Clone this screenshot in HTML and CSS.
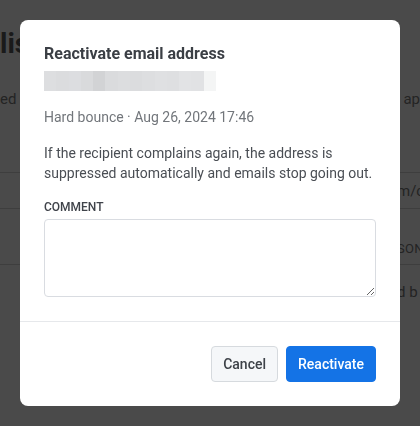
FILE: index.html
```html
<!DOCTYPE html>
<html lang="en">
<head>
<meta charset="utf-8">
<title>Reactivate email address</title>
<link rel="stylesheet" href="styles.css">
</head>
<body>
<main class="page">
  <h1 class="page-title">list</h1>
  <div class="page-sub"><span>ed recipients</span><span>n ap</span></div>
  <div class="table">
    <div class="row row-head"><span class="cell-right">m/c</span></div>
    <div class="row row-tall"><span class="cell-right caps">SON</span></div>
    <div class="row row-last"><span class="cell-right">d b</span></div>
  </div>
</main>

<div class="overlay">
  <div class="modal" role="dialog" aria-labelledby="modal-title">
    <div class="modal-body">
      <h2 class="modal-title" id="modal-title">Reactivate email address</h2>
      <div class="email-blur" aria-label="hidden email address">
        <span class="b1"></span><span class="b2"></span><span class="b3"></span><span class="b4"></span><span class="b5"></span><span class="b6"></span><span class="b7"></span><span class="b8"></span><span class="b9"></span><span class="b10"></span><span class="b11"></span><span class="b12"></span><span class="b13"></span><span class="b14"></span>
      </div>
      <p class="meta">Hard bounce · Aug 26, 2024 17:46</p>
      <p class="desc">If the recipient complains again, the address is suppressed automatically and emails stop going out.</p>
      <label class="field-label" for="comment">COMMENT</label>
      <textarea class="field-input" id="comment"></textarea>
    </div>
    <div class="modal-footer">
      <button class="btn btn-secondary" type="button">Cancel</button>
      <button class="btn btn-primary" type="button">Reactivate</button>
    </div>
  </div>
</div>
</body>
</html>
```

FILE: styles.css
```css
* { box-sizing: border-box; }

html, body {
  margin: 0;
  padding: 0;
  width: 420px;
  height: 426px;
  overflow: hidden;
  background: #ffffff;
  font-family: Roboto, "Liberation Sans", Arial, sans-serif;
}

/* background page (under overlay) */
.page {
  padding: 0;
  color: #7c7c7c;
}

.page-title {
  margin: 0;
  padding-top: 30px;
  font-size: 28px;
  line-height: 28px;
  font-weight: 700;
  color: #5a5a5a;
}

.page-sub {
  margin-top: 31px;
  display: flex;
  justify-content: space-between;
  font-size: 15px;
  line-height: 20px;
  color: #7c7c7c;
  white-space: nowrap;
}

.table {
  margin-top: 63px;
  border-top: 1px solid #d6d6d6;
}

.row {
  height: 56px;
  display: grid;
  grid-template-columns: 397px 23px;
  align-items: center;
  border-bottom: 1px solid #d6d6d6;
  font-size: 15px;
  color: #7a7a7a;
  white-space: nowrap;
}

.row-head {
  height: 36px;
}

.row-tall {
  align-items: end;
  padding-bottom: 8px;
}

.row-last {
  align-items: start;
  padding-top: 18px;
  border-bottom: 0;
}

.cell-right {
  grid-column: 2;
  overflow: hidden;
}

.caps {
  font-size: 13px;
  letter-spacing: 0.3px;
}

/* overlay + modal */
.overlay {
  position: fixed;
  inset: 0;
  background: rgba(0, 0, 0, 0.71);
  display: flex;
  align-items: flex-start;
  justify-content: center;
  padding-top: 20px;
}

.modal {
  width: 380px;
  background: #ffffff;
  border-radius: 8px;
  overflow: hidden;
}

.modal-body {
  padding: 24px 24px 24px;
  border-bottom: 1px solid #e6e8eb;
}

.modal-title {
  margin: 0;
  font-size: 16px;
  line-height: 20px;
  font-weight: 700;
  color: #3b3f45;
}

.email-blur {
  margin-top: 7px;
  width: 172px;
  height: 20px;
  display: flex;
}

.email-blur span { flex: 1; }
.b1 { background: #dddee0; }
.b2 { background: #dbdcde; }
.b3 { background: #dcdde0; }
.b4 { background: #d9dadc; }
.b5 { background: #d2d3d5; }
.b6 { background: #dadbdd; }
.b7 { background: #dcdddf; }
.b8 { background: #dbdcde; }
.b9 { background: #dddee0; }
.b10 { background: #dfe0e2; }
.b11 { background: #dedfe1; }
.b12 { background: #e2e3e5; }
.b13 { background: #e1e2e4; }
.b14 { background: #f4f5f5; }

.meta {
  margin: 16px 0 0;
  font-size: 14px;
  line-height: 20px;
  color: #72767b;
}

.desc {
  margin: 16px 0 0;
  font-size: 14px;
  line-height: 20px;
  color: #4a4e54;
}

.field-label {
  display: block;
  margin-top: 16px;
  font-size: 12px;
  line-height: 16px;
  font-weight: 500;
  color: #3f434a;
}

.field-input {
  display: block;
  margin-top: 4px;
  width: 100%;
  height: 78px;
  border: 1px solid #d9dce1;
  border-radius: 4px;
  padding: 8px;
  font-family: inherit;
  font-size: 14px;
  background: #ffffff;
}

.modal-footer {
  padding: 24px;
  display: flex;
  justify-content: flex-end;
  gap: 8px;
}

.btn {
  height: 36px;
  padding: 0 11px;
  border-radius: 4px;
  font-family: inherit;
  font-size: 14px;
  font-weight: 500;
  line-height: 20px;
  cursor: pointer;
}

.btn-secondary {
  background: #f5f7f9;
  border: 1px solid #d6dade;
  color: #3d4248;
}

.btn-primary {
  background: #1473e6;
  border: 1px solid #1473e6;
  color: #ffffff;
}
```
